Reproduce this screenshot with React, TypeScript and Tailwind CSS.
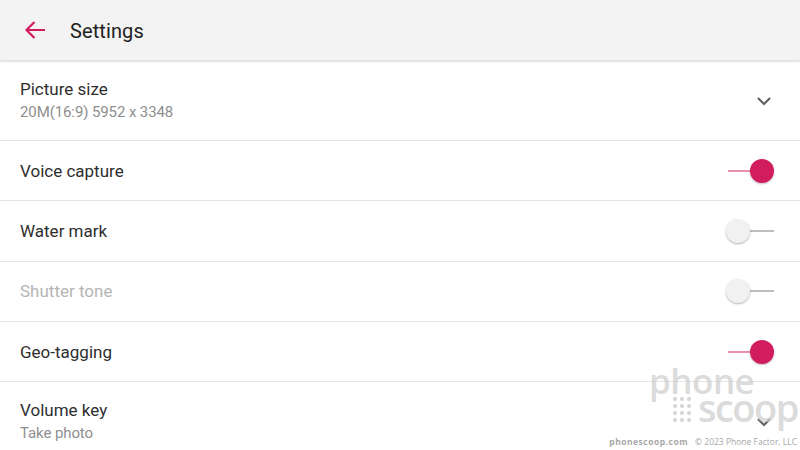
import React from "react";

const PINK = "#d11d5e";

function Toggle({ on }: { on: boolean }) {
  if (on) {
    return (
      <div className="relative w-[48px] h-[24px] flex items-center">
        <div className="absolute left-[2px] w-[30px] h-[2px] bg-[#e88fb0]" />
        <div className="absolute right-0 w-[24px] h-[24px] rounded-full bg-[#d11d5e] shadow-[0_1px_2px_rgba(0,0,0,0.25)]" />
      </div>
    );
  }
  return (
    <div className="relative w-[48px] h-[24px] flex items-center">
      <div className="absolute right-0 w-[30px] h-[2px] bg-[#bdbdbd]" />
      <div className="absolute left-0 w-[24px] h-[24px] rounded-full bg-[#f1f1f1] shadow-[0_1px_2px_rgba(0,0,0,0.3)]" />
    </div>
  );
}

function Chevron() {
  return (
    <svg width="16" height="10" viewBox="0 0 16 10" className="mr-[2px]">
      <path d="M2 2 L8 8 L14 2" fill="none" stroke="#616161" strokeWidth="2.2" />
    </svg>
  );
}

type Row = {
  title: string;
  sub?: string;
  kind: "select" | "toggle";
  on?: boolean;
  disabled?: boolean;
};

const rows: Row[] = [
  { title: "Picture size", sub: "20M(16:9) 5952 x 3348", kind: "select" },
  { title: "Voice capture", kind: "toggle", on: true },
  { title: "Water mark", kind: "toggle", on: false },
  { title: "Shutter tone", kind: "toggle", on: false, disabled: true },
  { title: "Geo-tagging", kind: "toggle", on: true },
  { title: "Volume key", sub: "Take photo", kind: "select" },
];

export default function App() {
  return (
    <div
      className="relative w-[800px] h-[450px] overflow-hidden bg-white"
      style={{ fontFamily: "Roboto, 'Noto Sans', sans-serif" }}
    >
      {/* header */}
      <div className="relative z-10 h-[61px] bg-[#f3f3f3] flex items-center border-b border-[#e0e0e0] shadow-[0_1px_2px_rgba(0,0,0,0.12)]">
        <div className="w-[70px] flex items-center pl-[24px]">
          <svg width="22" height="20" viewBox="0 0 22 20">
            <path d="M21 10 H2.5 M10.5 2 L2.5 10 L10.5 18" fill="none" stroke={PINK} strokeWidth="2.2" />
          </svg>
        </div>
        <span className="text-[20px] text-[#212121] tracking-[0.1px] pt-[1px]">Settings</span>
      </div>

      <div className="flex flex-col">
        {rows.map((r) => (
          <div
            key={r.title}
            className={`flex items-center justify-between pl-[20px] pr-[26px] border-b border-[#e4e4e4] ${
              r.sub ? "h-[80px]" : "h-[60.3px]"
            }`}
          >
            <div className="flex flex-col">
              <span className={`text-[17px] leading-[22px] ${r.disabled ? "text-[#b5b5b5]" : "text-[#2e2e2e]"}`}>
                {r.title}
              </span>
              {r.sub && (
                <span className="mt-[1px] text-[15px] leading-[22px] text-[#8e8e8e] tracking-[-0.1px]">{r.sub}</span>
              )}
            </div>
            {r.kind === "select" ? <Chevron /> : <Toggle on={!!r.on} />}
          </div>
        ))}
      </div>

      {/* watermark */}
      <div
        className="absolute inset-0 pointer-events-none text-[#cfcfcf] opacity-75"
        style={{ fontFamily: "'Open Sans', sans-serif" }}
      >
        <div className="absolute left-[649px] top-[363px] text-[35px] font-semibold leading-none tracking-[-0.5px]">phone</div>
        <div className="absolute left-[698px] top-[388px] text-[38px] font-semibold leading-none tracking-[-1.5px]">scoop</div>
        <div className="absolute left-[673px] top-[397px] grid grid-cols-3 gap-x-[3px] gap-y-[3px]">
          {Array.from({ length: 12 }).map((_, k) => (
            <div key={k} className="w-[4px] h-[4px] rounded-full bg-[#c8c8c8]" />
          ))}
        </div>
      </div>
      <div
        className="absolute right-[3px] bottom-[1px] text-[8.5px] text-[#a8a8a8] flex gap-[7px]"
        style={{ fontFamily: "'Open Sans', sans-serif" }}
      >
        <span className="font-bold tracking-[0.5px]">phonescoop.com</span>
        <span>© 2023 Phone Factor, LLC</span>
      </div>
    </div>
  );
}
